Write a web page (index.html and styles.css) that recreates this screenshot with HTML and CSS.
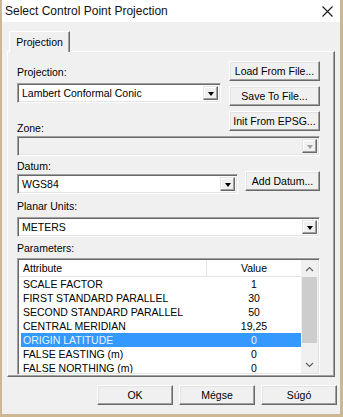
FILE: index.html
```html
<!DOCTYPE html>
<html lang="hu">
<head>
    <meta charset="UTF-8">
    <title>Select Control Point Projection</title>
    <link rel="stylesheet" href="styles.css">
</head>
<body>
    <div class="window">
        <!-- Title bar -->
        <div class="titlebar">
            <span class="title">Select Control Point Projection</span>
            <svg class="close" width="11" height="11" viewBox="0 0 11 11">
                <path d="M0.5 0.5L10.5 10.5M10.5 0.5L0.5 10.5" stroke="#1a1a1a" stroke-width="1.1" fill="none"/>
            </svg>
        </div>

        <!-- Tabs -->
        <div class="tabs">
            <div class="tab">Projection</div>
        </div>

        <div class="page">
            <div class="top">
                <div class="top-left">
                    <div class="label first-label">Projection:</div>
                    <div class="combo combo-proj">
                        <span class="combo-text">Lambert Conformal Conic</span>
                        <span class="arrow"></span>
                    </div>
                    <div class="label zone-label">Zone:</div>
                </div>
                <div class="side-buttons">
                    <button class="btn">Load From File...</button>
                    <button class="btn">Save To File...</button>
                    <button class="btn">Init From EPSG...</button>
                </div>
            </div>

            <div class="combo combo-full combo-zone disabled">
                <span class="combo-text"></span>
                <span class="arrow"></span>
            </div>

            <div class="label datum-label">Datum:</div>
            <div class="datum-row">
                <div class="combo combo-datum">
                    <span class="combo-text">WGS84</span>
                    <span class="arrow"></span>
                </div>
                <button class="btn btn-datum">Add Datum...</button>
            </div>

            <div class="label units-label">Planar Units:</div>
            <div class="combo combo-full combo-units">
                <span class="combo-text">METERS</span>
                <span class="arrow"></span>
            </div>

            <div class="label params-label">Parameters:</div>
            <div class="list">
                <div class="list-main">
                    <div class="list-head">
                        <span class="col-attr">Attribute</span>
                        <span class="col-val">Value</span>
                    </div>
                    <div class="row"><span class="col-attr">SCALE FACTOR</span><span class="col-val">1</span></div>
                    <div class="row"><span class="col-attr">FIRST STANDARD PARALLEL</span><span class="col-val">30</span></div>
                    <div class="row"><span class="col-attr">SECOND STANDARD PARALLEL</span><span class="col-val">50</span></div>
                    <div class="row"><span class="col-attr">CENTRAL MERIDIAN</span><span class="col-val">19,25</span></div>
                    <div class="row selected"><span class="col-attr">ORIGIN LATITUDE</span><span class="col-val">0</span></div>
                    <div class="row"><span class="col-attr">FALSE EASTING (m)</span><span class="col-val">0</span></div>
                    <div class="row"><span class="col-attr">FALSE NORTHING (m)</span><span class="col-val">0</span></div>
                </div>
                <div class="scrollbar">
                    <span class="sb-arrow">
                        <svg width="9" height="6" viewBox="0 0 9 6"><path d="M1 5L4.5 1.5L8 5" stroke="#606060" stroke-width="1.2" fill="none"/></svg>
                    </span>
                    <div class="sb-track"><div class="sb-thumb"></div></div>
                    <span class="sb-arrow">
                        <svg width="9" height="6" viewBox="0 0 9 6"><path d="M1 1L4.5 4.5L8 1" stroke="#606060" stroke-width="1.2" fill="none"/></svg>
                    </span>
                </div>
            </div>
        </div>

        <!-- Dialog buttons -->
        <div class="dialog-buttons">
            <button class="btn btn-dialog">OK</button>
            <button class="btn btn-dialog">Mégse</button>
            <button class="btn btn-dialog">Súgó</button>
        </div>
    </div>
</body>
</html>
```

FILE: styles.css
```css
/* Basic page setup */
* {
    margin: 0;
    padding: 0;
    box-sizing: border-box;
}

body {
    width: 343px;
    height: 417px;
    background-color: #cbb893;
    font-family: "Liberation Sans", Arial, sans-serif;
    font-size: 10.5px;
    color: #000;
    overflow: hidden;
}

.window {
    width: 338px;
    height: 414px;
    margin-left: 2px;
    background-color: #f0f0f0;
    display: flex;
    flex-direction: column;
}

/* Title bar */
.titlebar {
    height: 22px;
    background-color: #fff;
    display: flex;
    align-items: center;
    justify-content: space-between;
    padding: 0 7px 0 3px;
}

.title {
    font-size: 12px;
    color: #111;
}

/* Tabs */
.tabs {
    display: flex;
    margin-top: 9px;
    padding-left: 7px;
}

.tab {
    position: relative;
    z-index: 1;
    width: 61px;
    height: 21px;
    margin-bottom: -1px;
    background-color: #f0f0f0;
    border: 1px solid;
    border-color: #fff #696969 transparent #fff;
    border-bottom: none;
    box-shadow: inset -1px 0 #a0a0a0;
    display: flex;
    align-items: center;
    justify-content: center;
    padding-bottom: 1px;
}

.page {
    margin: 0 5px;
    height: 326px;
    border: 1px solid;
    border-color: #fff #696969 #696969 #fff;
    box-shadow: inset -1px -1px #a0a0a0;
    padding: 0 14px 0 9px;
}

.label {
    height: 13px;
    line-height: 13px;
}

/* Top section: projection + file buttons */
.top {
    display: flex;
    justify-content: space-between;
}

.first-label {
    margin-top: 14px;
}

.top-left .combo {
    margin-top: 4px;
}

.zone-label {
    margin-top: 19px;
}

.side-buttons {
    display: flex;
    flex-direction: column;
    gap: 5px;
    margin-top: 9px;
}

.side-buttons .btn {
    width: 91px;
}

/* Buttons */
.btn {
    height: 20px;
    font-family: inherit;
    font-size: 10.5px;
    color: #000;
    background-color: #f0f0f0;
    border: 1px solid;
    border-color: #fff #696969 #696969 #fff;
    box-shadow: inset -1px -1px #a0a0a0, inset 1px 1px #e3e3e3;
    text-align: center;
}

/* Combo boxes */
.combo {
    height: 20px;
    background-color: #fff;
    border: 1px solid;
    border-color: #a0a0a0 #fff #fff #a0a0a0;
    box-shadow: inset 1px 1px #696969, inset -1px -1px #e3e3e3;
    display: flex;
    align-items: center;
    padding: 2px 2px 2px 4px;
}

.combo-text {
    flex: 1;
    white-space: nowrap;
}

.arrow {
    width: 15px;
    height: 14px;
    background-color: #f0f0f0;
    border: 1px solid;
    border-color: #e3e3e3 #696969 #696969 #e3e3e3;
    box-shadow: inset -1px -1px #a0a0a0, inset 1px 1px #fff;
    display: flex;
    align-items: center;
    justify-content: center;
}

.arrow::after {
    content: "";
    border-left: 3.5px solid transparent;
    border-right: 3.5px solid transparent;
    border-top: 4px solid #000;
    margin-top: 1px;
}

.combo-proj {
    width: 204px;
}

.combo-full {
    width: 303px;
}

.combo-zone {
    margin-top: 1px;
}

.combo.disabled {
    background-color: #f0f0f0;
}

.combo.disabled .arrow::after {
    border-top-color: #a0a0a0;
}

/* Datum row */
.datum-label {
    margin-top: 4px;
}

.datum-row {
    display: flex;
    justify-content: space-between;
    align-items: flex-start;
    margin-top: -2px;
}

.combo-datum {
    width: 221px;
    margin-top: 3px;
}

.btn-datum {
    width: 75px;
}

.units-label {
    margin-top: 6px;
}

.combo-units {
    margin-top: 4px;
}

.params-label {
    margin-top: 5px;
}

/* Parameters list view */
.list {
    width: 303px;
    height: 117px;
    margin-top: 3px;
    background-color: #fff;
    border: 1px solid;
    border-color: #a0a0a0 #fff #fff #a0a0a0;
    box-shadow: inset 1px 1px #696969, inset -1px -1px #e3e3e3;
    padding: 1px;
    display: flex;
}

.list-main {
    flex: 1;
    overflow: hidden;
}

.list-head {
    height: 17px;
    display: flex;
    align-items: center;
    border-bottom: 1px solid #e5e5e5;
}

.list-head .col-attr {
    width: 188px;
    height: 100%;
    line-height: 16px;
    padding-left: 4px;
    border-right: 1px solid #e5e5e5;
}

.list-head .col-val {
    flex: 1;
    text-align: center;
}

.row {
    height: 14px;
    line-height: 14px;
    margin-left: 2px;
    display: flex;
}

.row .col-attr {
    width: 186px;
    padding-left: 2px;
    white-space: nowrap;
}

.row .col-val {
    flex: 1;
    text-align: center;
}

.row.selected {
    background-color: #3399ff;
    color: #e8f4ff;
}

/* Scrollbar */
.scrollbar {
    width: 17px;
    display: flex;
    flex-direction: column;
    background-color: #f0f0f0;
}

.sb-arrow {
    height: 17px;
    display: flex;
    align-items: center;
    justify-content: center;
}

.sb-track {
    flex: 1;
}

.sb-thumb {
    height: 66px;
    margin: 0 1px;
    background-color: #cdcdcd;
}

/* Dialog buttons */
.dialog-buttons {
    display: flex;
    justify-content: flex-end;
    gap: 6px;
    margin-top: 8px;
    padding-right: 3px;
}

.btn-dialog {
    width: 76px;
}
```
